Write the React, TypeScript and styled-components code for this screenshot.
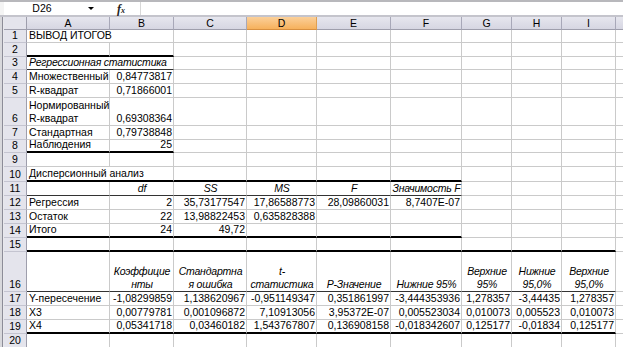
import React from 'react';
import styled, { createGlobalStyle } from 'styled-components';

const GlobalStyle = createGlobalStyle`
  html, body {
    margin: 0;
    padding: 0;
    background: #fff;
    overflow: hidden;
  }
  body {
    font-family: "Liberation Sans", Arial, sans-serif;
  }
`

type Align = 'left' | 'right' | 'center'
type Line = 'thick' | 'thin'

interface CellData {
    t: string
    align?: Align
    italic?: boolean
    span?: number
}

interface RowData {
    h: number
    cells?: Record<number, CellData>
    thick?: number // bottom thick border up to column index (inclusive)
    thin?: number
}

const COLS = [83, 64, 73, 70, 74, 71, 50, 50, 54]
const LETTERS = ['A', 'B', 'C', 'D', 'E', 'F', 'G', 'H', 'I']

const r = (t: string): CellData => ({ t, align: 'right' })
const h = (t: string): CellData => ({ t, align: 'center', italic: true })

const ROWS: RowData[] = [
    { h: 13, cells: { 0: { t: 'ВЫВОД ИТОГОВ', span: 2 } } },
    { h: 14, thick: 1 },
    { h: 13, cells: { 0: { t: 'Регрессионная статистика', italic: true, span: 2 } }, thin: 1 },
    { h: 14, cells: { 0: { t: 'Множественный' }, 1: r('0,84773817') } },
    { h: 14, cells: { 0: { t: 'R-квадрат' }, 1: r('0,71866001') } },
    { h: 28, cells: { 0: { t: 'Нормированный\nR-квадрат' }, 1: r('0,69308364') } },
    { h: 14, cells: { 0: { t: 'Стандартная' }, 1: r('0,79738848') } },
    { h: 13, cells: { 0: { t: 'Наблюдения' }, 1: r('25') }, thick: 1 },
    { h: 14 },
    { h: 15, cells: { 0: { t: 'Дисперсионный анализ', span: 2 } }, thick: 5 },
    { h: 14, cells: { 1: h('df'), 2: h('SS'), 3: h('MS'), 4: h('F'), 5: h('Значимость F') }, thin: 5 },
    { h: 14, cells: { 0: { t: 'Регрессия' }, 1: r('2'), 2: r('35,73177547'), 3: r('17,86588773'), 4: r('28,09860031'), 5: r('8,7407E-07') } },
    { h: 14, cells: { 0: { t: 'Остаток' }, 1: r('22'), 2: r('13,98822453'), 3: r('0,635828388') } },
    { h: 14, cells: { 0: { t: 'Итого' }, 1: r('24'), 2: r('49,72') }, thick: 5 },
    { h: 14, thick: 8 },
    {
        h: 40,
        cells: {
            1: h('Коэффицие\nнты'),
            2: h('Стандартна\nя ошибка'),
            3: h('t-\nстатистика'),
            4: h('P-Значение'),
            5: h('Нижние 95%'),
            6: h('Верхние\n95%'),
            7: h('Нижние\n95,0%'),
            8: h('Верхние\n95,0%'),
        },
        thin: 8,
    },
    { h: 14, cells: { 0: { t: 'Y-пересечение' }, 1: r('-1,08299859'), 2: r('1,138620967'), 3: r('-0,951149347'), 4: r('0,351861997'), 5: r('-3,444353936'), 6: r('1,278357'), 7: r('-3,44435'), 8: r('1,278357') } },
    { h: 14, cells: { 0: { t: 'X3' }, 1: r('0,00779781'), 2: r('0,001096872'), 3: r('7,10913056'), 4: r('3,95372E-07'), 5: r('0,005523034'), 6: r('0,010073'), 7: r('0,005523'), 8: r('0,010073') } },
    { h: 14, cells: { 0: { t: 'X4' }, 1: r('0,05341718'), 2: r('0,03460182'), 3: r('1,543767807'), 4: r('0,136908158'), 5: r('-0,018342607'), 6: r('0,125177'), 7: r('-0,01834'), 8: r('0,125177') }, thick: 8 },
    { h: 14 },
]

export default function App() {
    const cells: React.ReactNode[] = []

    ROWS.forEach((row, ri) => {
        cells.push(<RowHead key={`h${ri}`}>{ri + 1}</RowHead>)
        let ci = 0
        while (ci < COLS.length) {
            const data = row.cells?.[ci]
            const span = data?.span ?? 1
            const bottom: Line | undefined =
                row.thick !== undefined && ci <= row.thick ? 'thick'
                    : row.thin !== undefined && ci <= row.thin ? 'thin'
                        : undefined
            cells.push(
                <Cell
                    key={`c${ri}-${ci}`}
                    $align={data?.align ?? 'left'}
                    $italic={!!data?.italic}
                    $span={span}
                    $bottom={bottom}
                >
                    {data?.t}
                </Cell>
            )
            ci += span
        }
        cells.push(<Cell key={`x${ri}`} $align="left" $italic={false} $span={1} />)
    })

    return (
        <>
            <GlobalStyle />
            <Window>
                <TopStrip />
                <FormulaBar>
                    <NameBox>D26</NameBox>
                    <DropButton><Arrow /></DropButton>
                    <FxButton>f<sub>x</sub></FxButton>
                    <FormulaInput />
                </FormulaBar>
                <SheetArea>
                    <Frame />
                    <Grid $rows={ROWS.map(x => x.h)}>
                        <Corner />
                        {LETTERS.map((l, i) => (
                            <ColHead key={l} $active={i === 3}>{l}</ColHead>
                        ))}
                        <ColHead $active={false} />
                        {cells}
                    </Grid>
                </SheetArea>
            </Window>
        </>
    )
}

const Window = styled.div`
    width: 623px;
    height: 347px;
    overflow: hidden;
    display: flex;
    flex-direction: column;
    background: #fff;
`

const TopStrip = styled.div`
    height: 2px;
    background: #b8b8bc;
    flex-shrink: 0;
`

const FormulaBar = styled.div`
    height: 13px;
    display: flex;
    align-items: stretch;
    background: #f4f4f4;
    border-bottom: 2px solid #c4c4cc;
    flex-shrink: 0;
`

const NameBox = styled.div`
    width: 76px;
    margin-left: 4px;
    background: #fff;
    font-size: 10.5px;
    line-height: 13px;
    text-align: center;
    color: #000;
`

const DropButton = styled.div`
    width: 22px;
    display: flex;
    align-items: center;
    justify-content: center;
    background: #fff;
`

const Arrow = styled.span`
    width: 0;
    height: 0;
    border-left: 3px solid transparent;
    border-right: 3px solid transparent;
    border-top: 3px solid #000;
`

const FxButton = styled.div`
    width: 38px;
    display: flex;
    align-items: center;
    justify-content: center;
    background: #fff;
    font-family: "Liberation Serif", serif;
    font-style: italic;
    font-size: 12px;
    font-weight: bold;
    color: #222;
    line-height: 12px;

    sub {
        font-size: 8px;
        line-height: 8px;
        vertical-align: baseline;
        position: relative;
        top: 2px;
    }
`

const FormulaInput = styled.div`
    flex: 1;
    background: #fff;
    border-left: 1px solid #d8d8d8;
`

const SheetArea = styled.div`
    flex: 1;
    display: flex;
    min-height: 0;
`

const Frame = styled.div`
    width: 4px;
    flex-shrink: 0;
    background: linear-gradient(90deg, #d8d8dc 0, #d8d8dc 2px, #8c8c98 2px, #8c8c98 3px, #e8e8ec 3px);
`

const Grid = styled.div<{ $rows: number[] }>`
    display: grid;
    grid-template-columns: 23px ${COLS.map(c => `${c}px`).join(' ')} 20px;
    grid-template-rows: 13px ${p => p.$rows.map(x => `${x}px`).join(' ')};
    font-size: 10.5px;
    color: #000;
`

const Corner = styled.div`
    box-sizing: border-box;
    background: #e4e4ec;
    border-right: 1px solid #9e9eac;
    border-bottom: 1px solid #9e9eac;
`

const ColHead = styled.div<{ $active: boolean }>`
    box-sizing: border-box;
    background: ${p => p.$active
        ? 'linear-gradient(#fbd09a, #f6b15c)'
        : 'linear-gradient(#e6e6ee, #d6d6e2)'};
    border-right: 1px solid ${p => p.$active ? '#e0a050' : '#a8a8b8'};
    border-bottom: 1px solid ${p => p.$active ? '#d89040' : '#9e9eac'};
    display: flex;
    align-items: center;
    justify-content: center;
    font-size: 10.5px;
    line-height: 12px;
`

const RowHead = styled.div`
    box-sizing: border-box;
    background: #e4e4ec;
    border-right: 1px solid #9e9eac;
    border-bottom: 1px solid #c4c4d0;
    display: flex;
    align-items: flex-end;
    justify-content: center;
    line-height: 13px;
    font-size: 10.5px;
`

const Cell = styled.div<{ $align: Align; $italic: boolean; $span: number; $bottom?: Line }>`
    box-sizing: border-box;
    grid-column: span ${p => p.$span};
    border-right: 1px solid #cacaca;
    border-bottom: ${p => p.$bottom === 'thick'
        ? '2px solid #000'
        : p.$bottom === 'thin' ? '1px solid #333' : '1px solid #cacaca'};
    display: flex;
    align-items: flex-end;
    justify-content: ${p => p.$align === 'right' ? 'flex-end' : p.$align === 'center' ? 'center' : 'flex-start'};
    text-align: ${p => p.$align};
    font-style: ${p => p.$italic ? 'italic' : 'normal'};
    letter-spacing: ${p => p.$italic ? '-0.2px' : '0'};
    white-space: pre;
    line-height: 13px;
    padding: 0 1px 0 2px;
    min-width: 0;
`
